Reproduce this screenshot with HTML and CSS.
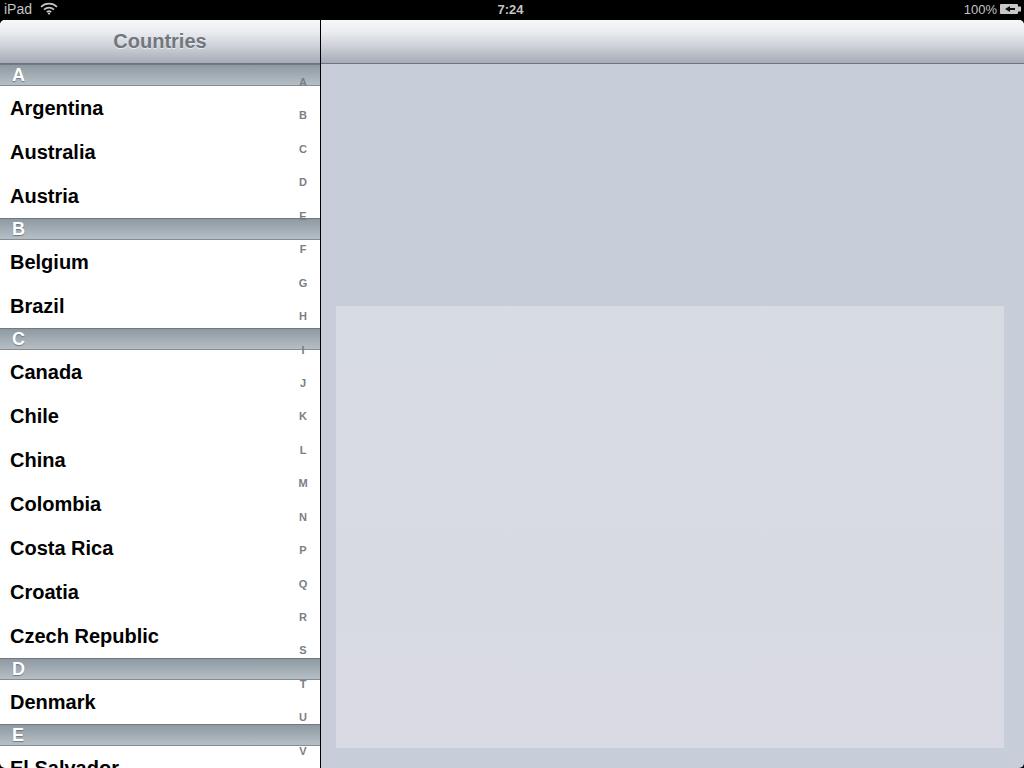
FILE: index.html
```html
<!DOCTYPE html>
<html lang="en">
<head>
    <meta charset="UTF-8">
    <title>Countries</title>
    <link rel="stylesheet" href="styles.css">
</head>
<body>
    <div class="status-bar">
        <div class="status-left">
            <span>iPad</span>
            <svg class="wifi" width="18" height="13" viewBox="0 0 18 13">
                <path d="M1 4.800C5.500 .6 12.500 .6 17 4.800" />
                <path d="M4 7.600C6.900 5 11.100 5 14 7.600" />
                <path d="M6.800 10.100C8 9 10 9 11.200 10.100" />
                <circle cx="9" cy="11.600" r="1.100" />
            </svg>
        </div>
        <div class="status-time">7:24</div>
        <div class="status-right">
            <span>100%</span>
            <svg class="battery" width="21" height="10" viewBox="0 0 21 10">
                <rect x="0" y="0" width="18" height="10" rx="1" fill="#c8c8c8" />
                <rect x="18" y="2.500" width="3" height="5" fill="#c8c8c8" />
                <path d="M5 5L10 2V4H15V6H10V8Z" fill="#111" />
            </svg>
        </div>
    </div>

    <div class="split">
        <div class="master">
            <div class="nav-bar nav-left">Countries</div>
            <div class="list">
                <div class="section-head">A</div>
                <div class="row">Argentina</div>
                <div class="row">Australia</div>
                <div class="row">Austria</div>
                <div class="section-head">B</div>
                <div class="row">Belgium</div>
                <div class="row">Brazil</div>
                <div class="section-head">C</div>
                <div class="row">Canada</div>
                <div class="row">Chile</div>
                <div class="row">China</div>
                <div class="row">Colombia</div>
                <div class="row">Costa Rica</div>
                <div class="row">Croatia</div>
                <div class="row">Czech Republic</div>
                <div class="section-head">D</div>
                <div class="row">Denmark</div>
                <div class="section-head">E</div>
                <div class="row">El Salvador</div>
            </div>
            <div class="index">
                <span>A</span><span>B</span><span>C</span><span>D</span><span>E</span><span>F</span><span>G</span>
                <span>H</span><span>I</span><span>J</span><span>K</span><span>L</span><span>M</span><span>N</span>
                <span>P</span><span>Q</span><span>R</span><span>S</span><span>T</span><span>U</span><span>V</span>
            </div>
        </div>
        <div class="detail">
            <div class="nav-bar nav-right"></div>
            <div class="detail-body">
                <div class="panel"></div>
            </div>
        </div>
    </div>
</body>
</html>
```

FILE: styles.css
```css
html, body {
    margin: 0;
    height: 768px;
    overflow: hidden;
    background: #000;
    font-family: "Liberation Sans", Arial, sans-serif;
}

.status-bar {
    height: 20px;
    display: grid;
    grid-template-columns: 1fr auto 1fr;
    align-items: center;
    padding: 0 3px 2px 4px;
    box-sizing: border-box;
    color: #c4c4c4;
    font-size: 13px;
}

.status-left {
    display: flex;
    align-items: center;
    gap: 8px;
    font-size: 14px;
}

.wifi {
    margin-top: -1px;
}

.wifi path {
    fill: none;
    stroke: #c4c4c4;
    stroke-width: 1.700;
}

.wifi circle {
    fill: #c4c4c4;
}

.status-time {
    font-weight: bold;
    margin-right: 4px;
}

.status-right {
    display: flex;
    align-items: center;
    justify-content: flex-end;
    gap: 3px;
}

.split {
    display: flex;
    height: 748px;
}

.master {
    position: relative;
    width: 320px;
    overflow: hidden;
    border-radius: 5px 0 0 5px;
    background: #fff;
}

.detail {
    flex: 1;
    margin-left: 1px;
    overflow: hidden;
    border-radius: 0 5px 5px 0;
    background: #c8ced9;
    display: flex;
    flex-direction: column;
}

.nav-bar {
    height: 44px;
    box-sizing: border-box;
    background: linear-gradient(#f6f7f9 0%, #eceef2 25%, #d3d6dd 55%, #a6abb6 100%);
    border-bottom: 1px solid #6d7380;
}

.nav-left {
    text-align: center;
    line-height: 42px;
    font-size: 20px;
    font-weight: bold;
    color: #71777f;
    text-shadow: 0 1px 0 rgba(255, 255, 255, 0.6);
}

.section-head {
    height: 22px;
    box-sizing: border-box;
    padding-left: 12px;
    line-height: 20px;
    font-size: 18px;
    font-weight: bold;
    color: #fff;
    text-shadow: 0 1px 1px rgba(70, 80, 90, 0.6);
    background: linear-gradient(#8e99a1, #b7bfc6);
    border-top: 1px solid #6f7a82;
    border-bottom: 1px solid #848d95;
}

.row {
    height: 44px;
    box-sizing: border-box;
    padding-left: 10px;
    line-height: 44px;
    font-size: 20px;
    font-weight: bold;
    color: #000;
}

.index {
    position: absolute;
    top: 44px;
    right: 4px;
    width: 26px;
    height: 704px;
    padding-top: 10px;
    box-sizing: border-box;
    display: flex;
    flex-direction: column;
    align-items: center;
    color: #7b7f85;
    font-size: 11px;
    font-weight: bold;
}

.index span {
    flex: 0 0 33.450px;
    line-height: 16px;
}

.detail-body {
    flex: 1;
    display: flex;
    align-items: flex-end;
    padding: 0 20px 20px 15px;
}

.panel {
    flex: 1;
    height: 442px;
    background: linear-gradient(#d7dbe2, #d9dae3);
}
```
